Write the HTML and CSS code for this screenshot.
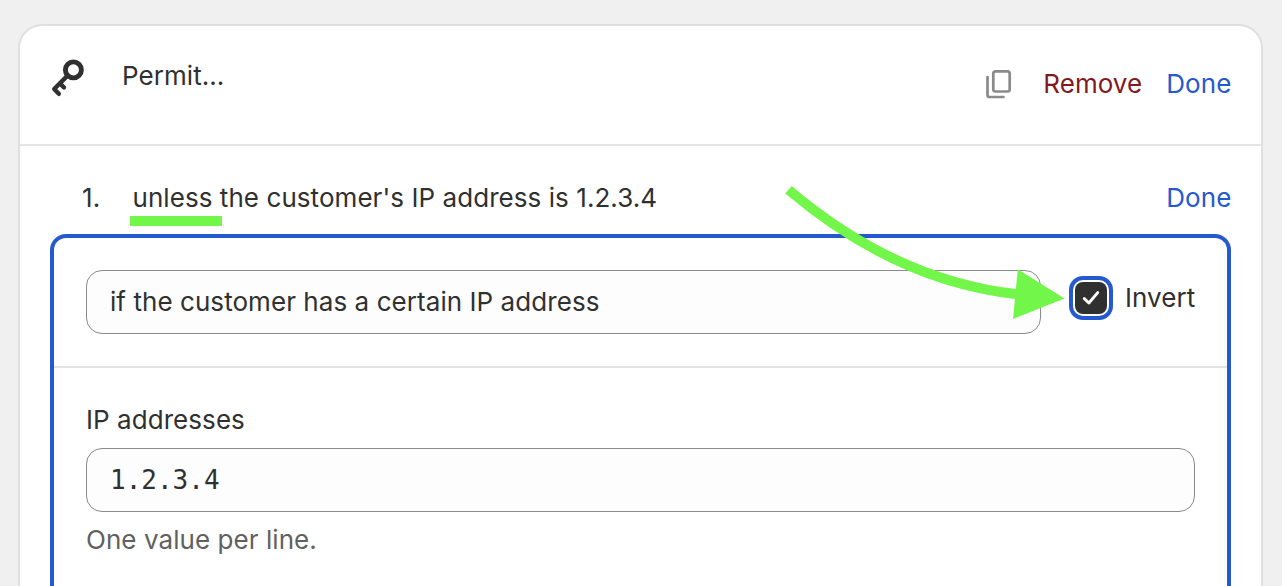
FILE: index.html
```html
<!DOCTYPE html>
<html lang="en">
<head>
<meta charset="utf-8">
<title>Permit rule</title>
<link rel="stylesheet" href="styles.css">
</head>
<body>
<main class="card">
  <header class="card-header">
    <svg class="key-icon" width="36" height="40" viewBox="0 0 36 40" aria-hidden="true">
      <circle cx="23.4" cy="11.9" r="8" fill="none" stroke="#303030" stroke-width="4.9"/>
      <path d="M17.8 17.4L4.2 31L8.8 35.8M10.2 25.6L14 29.5" fill="none" stroke="#303030" stroke-width="4.4" stroke-linejoin="round" stroke-linecap="round"/>
    </svg>
    <h1 class="title">Permit...</h1>
    <div class="actions">
      <svg class="copy-icon" width="26" height="30" viewBox="0 0 26 30" aria-hidden="true">
        <rect x="7.3" y="2.3" width="16.4" height="20.2" rx="2.2" fill="none" stroke="#8a8a8a" stroke-width="2.7"/>
        <path d="M1.5 8V26Q1.5 28 3.5 28H17.5" fill="none" stroke="#8a8a8a" stroke-width="2.7" stroke-linecap="round"/>
      </svg>
      <a class="link link-remove">Remove</a>
      <a class="link">Done</a>
    </div>
  </header>
  <section class="rule">
    <div class="rule-row">
      <span class="rule-number">1.</span>
      <p class="rule-text"><span class="marked">unless</span> the customer's IP address is 1.2.3.4</p>
      <a class="link">Done</a>
    </div>
    <div class="editor">
      <div class="condition">
        <div class="field select">if the customer has a certain IP address</div>
        <div class="invert">
          <span class="checkbox">
            <svg width="32" height="32" viewBox="0 0 32 32" aria-hidden="true"><path d="M9.3 16.6L13.9 21L22.7 10.6" fill="none" stroke="#fff" stroke-width="2.9" stroke-linecap="round" stroke-linejoin="round"/></svg>
          </span>
          <span class="invert-label">Invert</span>
        </div>
      </div>
      <div class="values">
        <div class="label">IP addresses</div>
        <div class="field mono">1.2.3.4</div>
        <div class="help">One value per line.</div>
      </div>
    </div>
  </section>
</main>
<svg class="arrow" width="282" height="138" viewBox="0 0 282 138" aria-hidden="true">
  <path d="M8.5 9.8Q116 101 238 114.4" fill="none" stroke="#72f64a" stroke-width="10"/>
  <path d="M237.8 89.3L284.5 118.5L233 139Z" fill="#72f64a"/>
</svg>
</body>
</html>
```
FILE: styles.css
```css
* { box-sizing: border-box; }
body {
  height: 586px;
  margin: 0;
  padding: 24px 19px 0 18px;
  background: #f0f0f0;
  color: #303030;
  font: 400 26px/40px Inter, "Liberation Sans", sans-serif;
  letter-spacing: 0.06px;
}
.card {
  height: 562px;
  background: #fff;
  border: 2px solid #dfdfdf;
  border-bottom: 0;
  border-radius: 24px 24px 0 0;
}
.card-header {
  display: flex;
  align-items: flex-start;
  height: 120px;
  padding: 30px 30px 0;
  border-bottom: 2px solid #e5e5e5;
}
.key-icon { margin-top: 2px; }
.title { flex: 1; margin: 0 0 0 36px; font-size: 26px; font-weight: 400; }
.actions { display: flex; align-items: center; height: 56px; }
.copy-icon { margin-right: 31.5px; }
.link { margin-right: -0.4px; color: #2459d0; }
.link-remove { margin-right: 24px; color: #81191f; }
.rule { padding: 32px 30px 0; }
.rule-row { display: flex; height: 56px; }
.rule-number { width: 50.5px; margin-left: 32px; }
.rule-text { flex: 1; margin: 0; }
.marked { position: relative; }
.marked::after {
  content: "";
  position: absolute;
  left: -2.5px;
  top: 34px;
  width: 92px;
  height: 10px;
  background: #72f64a;
}
.editor {
  height: 352px;
  border: 4px solid #2459d0;
  border-bottom: 0;
  border-radius: 16px 16px 0 0;
}
.condition {
  display: flex;
  height: 130px;
  padding: 32px 0 0 32px;
  border-bottom: 2px solid #e3e3e3;
}
.field {
  height: 64px;
  padding: 11px 23px;
  background: #fdfdfd;
  border: 1px solid #8a8a8a;
  border-radius: 16px;
}
.select { width: 955px; }
.invert { display: flex; align-items: center; height: 56px; margin-left: 34px; }
.checkbox {
  width: 32px;
  height: 32px;
  background: #303030;
  border-radius: 8px;
  outline: 4px solid #2459d0;
  outline-offset: 2px;
}
.checkbox svg { display: block; }
.invert-label { margin-left: 18px; }
.values { padding: 32px 32px 0; }
.label { height: 48px; }
.mono { font-family: "DejaVu Sans Mono", monospace; letter-spacing: 0; }
.help { margin-top: 8px; color: #616161; }
.arrow { position: absolute; left: 780px; top: 180px; overflow: visible; }
```
